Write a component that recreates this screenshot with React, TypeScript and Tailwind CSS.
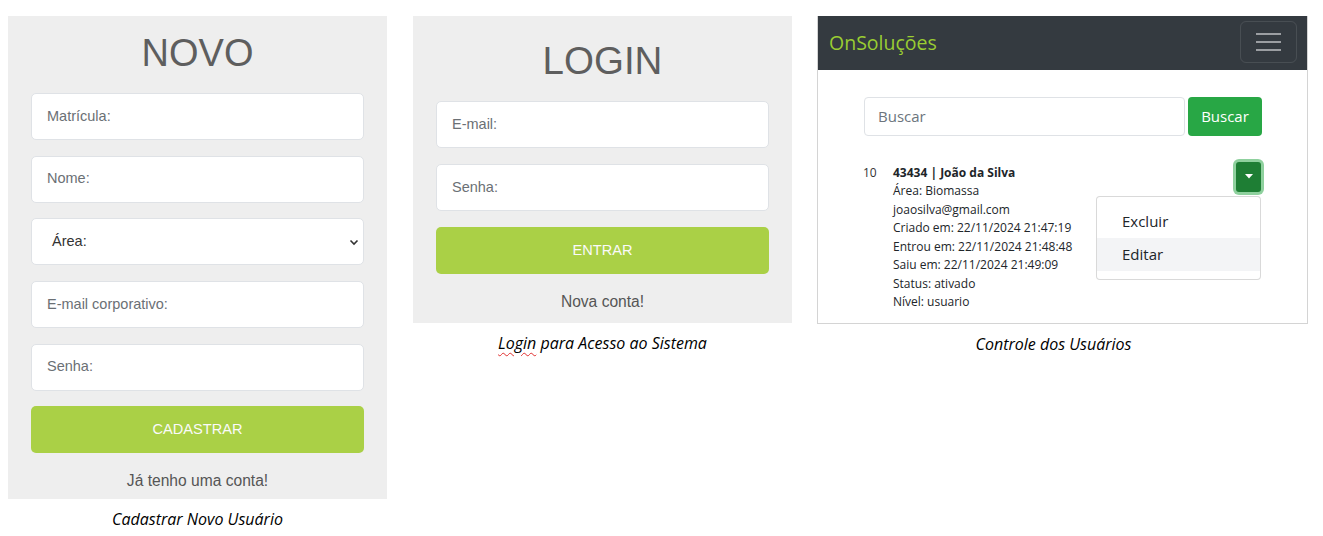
import React from "react";

const arial = { fontFamily: '"Liberation Sans", Arial, sans-serif' };
const sans = { fontFamily: '"Open Sans", "Noto Sans", sans-serif' };
const caption = { fontFamily: '"Open Sans", "Noto Sans", sans-serif' };

function Field({ label, select }: { label: string; select?: boolean }) {
  return (
    <div className="h-[47px] bg-white border border-[#dfe2e6] rounded-[5px] flex items-center justify-between">
      <span className={`text-[14.5px] text-[#6b7075] ${select ? "pl-[20px] text-[#333]" : "pl-[15px]"}`}>{label}</span>
      {select && (
        <svg width="10" height="8" viewBox="0 0 10 8" className="mr-[4px]">
          <path d="M1.5 2.5 L5 6 L8.5 2.5" fill="none" stroke="#333" strokeWidth="1.6" />
        </svg>
      )}
    </div>
  );
}

function GreenButton({ label }: { label: string }) {
  return (
    <div className="h-[47px] bg-[#aad046] rounded-[5px] flex items-center justify-center text-[14.6px] text-[#fafafa]">
      {label}
    </div>
  );
}

function Caption({ children, className = "" }: { children: React.ReactNode; className?: string }) {
  return (
    <p style={caption} className={`mt-[10px] text-center italic text-[16px] leading-[20px] text-black ${className}`}>
      {children}
    </p>
  );
}

const userLines = [
  "Área: Biomassa",
  "joaosilva@gmail.com",
  "Criado em: 22/11/2024 21:47:19",
  "Entrou em: 22/11/2024 21:48:48",
  "Saiu em: 22/11/2024 21:49:09",
  "Status: ativado",
  "Nível: usuario",
];

export default function App() {
  return (
    <div className="w-[1323px] h-[536px] bg-white flex items-start pl-[8px] pt-[16px]">
      {/* cadastro */}
      <div className="w-[379px]">
        <div style={arial} className="bg-[#eeeeee] px-[23px] pt-[15px] pb-[8px]">
          <h1 className="text-center text-[38px] leading-[44px] text-[#5e5e5e]">NOVO</h1>
          <div className="mt-[18px] flex flex-col gap-[15.7px]">
            <Field label="Matrícula:" />
            <Field label="Nome:" />
            <Field label="Área:" select />
            <Field label="E-mail corporativo:" />
            <Field label="Senha:" />
            <GreenButton label="CADASTRAR" />
          </div>
          <p className="mt-[17.5px] text-center text-[15.6px] leading-[20px] text-[#555]">Já tenho uma conta!</p>
        </div>
        <Caption>Cadastrar Novo Usuário</Caption>
      </div>

      {/* login */}
      <div className="w-[379px] ml-[26px]">
        <div style={arial} className="bg-[#eeeeee] px-[23px] pt-[23px] pb-[11px]">
          <h1 className="text-center text-[38.5px] leading-[44px] text-[#5e5e5e]">LOGIN</h1>
          <div className="mt-[18px] flex flex-col gap-[16px]">
            <Field label="E-mail:" />
            <Field label="Senha:" />
            <GreenButton label="ENTRAR" />
          </div>
          <p className="mt-[18px] text-center text-[15.6px] leading-[20px] text-[#555]">Nova conta!</p>
        </div>
        <Caption>
          <span className="underline decoration-wavy decoration-[#e03030] decoration-1 underline-offset-[3px]">Login</span> para Acesso ao Sistema
        </Caption>
      </div>

      {/* controle */}
      <div className="w-[491px] ml-[25px]">
        <div style={sans} className="border-x border-b border-[#d4d4d4] bg-white pb-[11px]">
          <nav className="h-[54px] bg-[#343a40] flex items-center justify-between pl-[11px] pr-[10px]">
            <span className="text-[19.5px] text-[#9acd32] mt-[-1px]">OnSoluções</span>
            <div className="w-[57px] h-[42px] mt-[-2px] border border-white/10 rounded-[6px] flex flex-col items-center justify-center gap-[6.3px]">
              <span className="block w-[25px] h-[2px] bg-[#9b9ea2]" />
              <span className="block w-[25px] h-[2px] bg-[#9b9ea2]" />
              <span className="block w-[25px] h-[2px] bg-[#9b9ea2]" />
            </div>
          </nav>

          <div className="mt-[26.5px] flex gap-[3px] pl-[46px] pr-[45px]">
            <div className="flex-1 h-[39px] border border-[#dfe2e6] rounded-[4px] flex items-center pl-[13px] text-[15px] text-[#6c757d]">
              Buscar
            </div>
            <div className="w-[74px] h-[39px] bg-[#28a745] rounded-[4px] flex items-center justify-center text-[15px] text-white">
              Buscar
            </div>
          </div>

          <div className="mt-[28px] flex pl-[45px] pr-[46px] text-[12px] leading-[18.5px] text-[#212529]">
            <span className="w-[30px] shrink-0 text-[#333]">10</span>
            <div className="flex-1">
              <p className="font-bold">43434 | João da Silva</p>
              {userLines.map((l) => (
                <p key={l}>{l}</p>
              ))}
            </div>
            <div className="relative self-start mt-[-2px]">
              <div className="w-[25px] h-[30px] bg-[#1e7e34] rounded-[3px] ring-[3px] ring-[#8fd19e] flex items-center justify-center">
                <svg width="8" height="5" viewBox="0 0 8 5">
                  <path d="M0 0 L8 0 L4 4.5 Z" fill="white" />
                </svg>
              </div>
              <div className="absolute right-0 top-[34px] w-[165px] bg-white border border-black/15 rounded-[4px] py-[8px] text-[15px] leading-[20px]">
                <div className="h-[33px] flex items-center pl-[25px]">Excluir</div>
                <div className="h-[33px] flex items-center pl-[25px] bg-[#f3f4f6]">Editar</div>
              </div>
            </div>
          </div>
        </div>
        <Caption className="pr-[18px]">Controle dos Usuários</Caption>
      </div>
    </div>
  );
}
